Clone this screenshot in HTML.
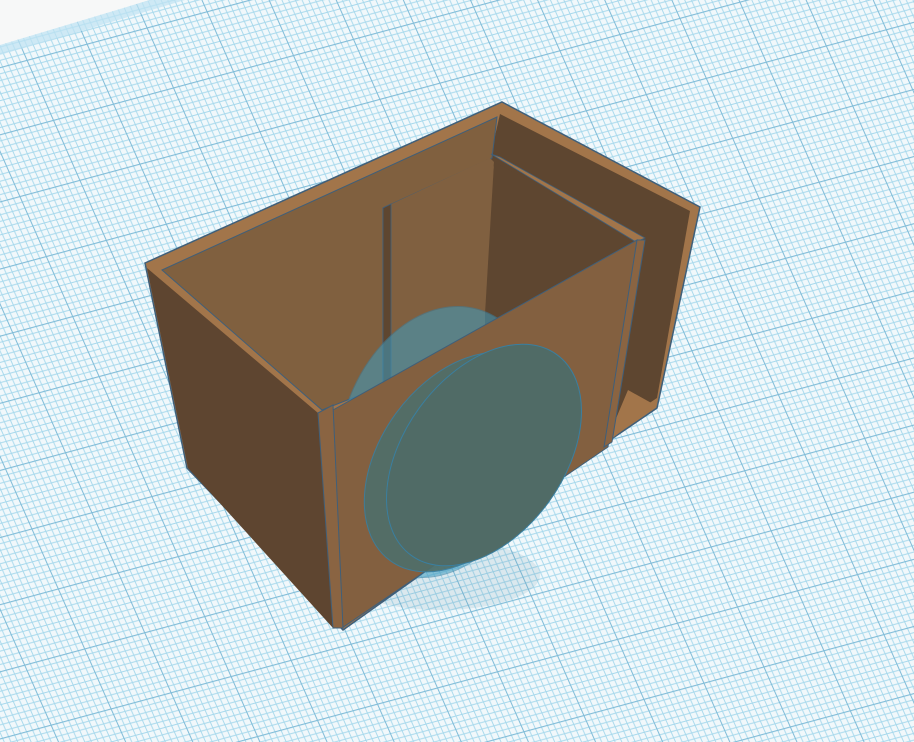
<!DOCTYPE html>
<html><head><style>html,body{margin:0;padding:0;background:#fff}svg{display:block}</style></head>
<body>
<svg width="914" height="742" viewBox="0 0 914 742" xmlns="http://www.w3.org/2000/svg">
<defs>
<pattern id="g" width="60" height="60" patternUnits="userSpaceOnUse" patternTransform="matrix(1,-0.27,0.44,1,0,0)">
<rect width="60" height="60" fill="#f1f8fb"/>
<path d="M6 0V60M12 0V60M18 0V60M24 0V60M30 0V60M36 0V60M42 0V60M48 0V60M54 0V60M0 6H60M0 12H60M0 18H60M0 24H60M0 30H60M0 36H60M0 42H60M0 48H60M0 54H60" stroke="#a6d8ec" stroke-width="0.9"/>
<path d="M0.5 0V60M0 0.5H60" stroke="#80bcd8" stroke-width="1"/>
</pattern>
</defs>
<rect width="914" height="742" fill="url(#g)"/>
<polygon points="0,0 150,0 0,45" fill="#f7f8f8"/>
<polygon points="0,45 150,0 185,0 0,55" fill="#bfe3f2" opacity="0.7"/>
<ellipse cx="440" cy="575" rx="100" ry="35" fill="#5a8fa8" opacity="0.15"/>
<polygon points="145,263 502,102 700,207 657,408 610,440 343,630 187,468" fill="#a2754a" stroke="#3f5f7a" stroke-width="1.5"/>
<polygon points="147,268 318,413 333,628 188,468" fill="#5e4530"/>
<polygon points="500,114 690,211 657,398 612,428 490,158" fill="#5e4630"/>
<polygon points="162,270 497,117 492,158 383,208 383,386 322,410" fill="#80603f" stroke="#3f5f7a" stroke-width="1"/>
<polygon points="383,208 490,158 494,162 485,330 390,380 383,386" fill="#806040"/>
<polygon points="383,208 391,204 391,380 383,386" fill="#5e4630" stroke="#3f5f7a" stroke-width="0.8"/>
<polygon points="494,162 637,238 485,330 485,314" fill="#5e4630"/>
<polygon points="491,154 500,157 645,238 636,242" fill="#a2754a" stroke="#3f5f7a" stroke-width="0.8"/>
<ellipse cx="440" cy="442" rx="138" ry="100" transform="rotate(-74 440 442)" fill="#3e9cc0" opacity="0.55" stroke="#3a7fa0" stroke-width="1"/>
<polygon points="612,428 628,390 655,405 610,440" fill="#a2754a"/>
<polygon points="333,410 637,240 608,447 342,628" fill="#836040" stroke="#3f5f7a" stroke-width="1"/>
<polygon points="318,413 333,405 343,628 333,628" fill="#8a6442" stroke="#3f5f7a" stroke-width="1"/>
<polygon points="637,240 645,240 612,442 604,447" fill="#8a6442" stroke="#3f5f7a" stroke-width="1"/>
<ellipse cx="462" cy="462" rx="122" ry="82" transform="rotate(-54 462 462)" fill="#4f6f6a" opacity="0.92" stroke="#3a7fa0" stroke-width="1"/>
<ellipse cx="484" cy="455" rx="124" ry="80" transform="rotate(-54 484 455)" fill="#506b66" stroke="#3a7fa0" stroke-width="1"/>
</svg>
</body></html>
